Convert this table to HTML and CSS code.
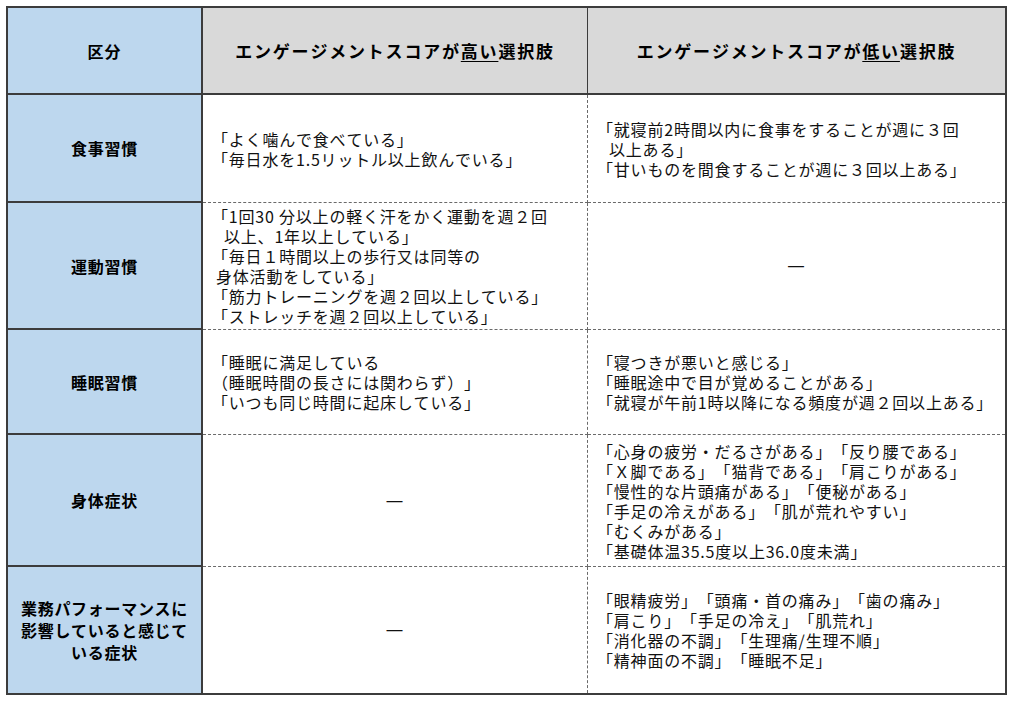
FILE: index.html
```html
<!DOCTYPE html>
<html lang="ja">
<head>
<meta charset="utf-8">
<title>エンゲージメントスコア</title>
<link rel="stylesheet" href="styles.css">
</head>
<body>
<div class="table">
  <div class="cell head-key">区分</div>
  <div class="cell head">エンゲージメントスコアが<span class="ul">高い</span>選択肢</div>
  <div class="cell head last">エンゲージメントスコアが<span class="ul">低い</span>選択肢</div>

  <div class="cell key">食事習慣</div>
  <div class="cell body">
    <div>「よく噛んで食べている」</div>
    <div>「毎日水を1.5リットル以上飲んでいる」</div>
  </div>
  <div class="cell body last">
    <div>「就寝前2時間以内に食事をすることが週に３回</div>
    <div class="ind">以上ある」</div>
    <div>「甘いものを間食することが週に３回以上ある」</div>
  </div>

  <div class="cell key">運動習慣</div>
  <div class="cell body">
    <div>「1回30 分以上の軽く汗をかく運動を週２回</div>
    <div class="ind">以上、1年以上している」</div>
    <div>「毎日１時間以上の歩行又は同等の</div>
    <div class="ind-s">身体活動をしている」</div>
    <div>「筋力トレーニングを週２回以上している」</div>
    <div>「ストレッチを週２回以上している」</div>
  </div>
  <div class="cell body last dash">—</div>

  <div class="cell key">睡眠習慣</div>
  <div class="cell body">
    <div>「睡眠に満足している</div>
    <div>（睡眠時間の長さには関わらず）」</div>
    <div>「いつも同じ時間に起床している」</div>
  </div>
  <div class="cell body last">
    <div>「寝つきが悪いと感じる」</div>
    <div>「睡眠途中で目が覚めることがある」</div>
    <div>「就寝が午前1時以降になる頻度が週２回以上ある」</div>
  </div>

  <div class="cell key">身体症状</div>
  <div class="cell body dash">—</div>
  <div class="cell body last">
    <div>「心身の疲労・だるさがある」「反り腰である」</div>
    <div>「Ｘ脚である」「猫背である」「肩こりがある」</div>
    <div>「慢性的な片頭痛がある」「便秘がある」</div>
    <div>「手足の冷えがある」「肌が荒れやすい」</div>
    <div>「むくみがある」</div>
    <div>「基礎体温35.5度以上36.0度未満」</div>
  </div>

  <div class="cell key bottom">業務パフォーマンスに<br>影響していると感じて<br>いる症状</div>
  <div class="cell body dash bottom">—</div>
  <div class="cell body last bottom">
    <div>「眼精疲労」「頭痛・首の痛み」「歯の痛み」</div>
    <div>「肩こり」「手足の冷え」「肌荒れ」</div>
    <div>「消化器の不調」「生理痛/生理不順」</div>
    <div>「精神面の不調」「睡眠不足」</div>
  </div>
</div>
</body>
</html>
```

FILE: styles.css
```css
html, body {
  margin: 0;
  padding: 0;
  background: #ffffff;
}

body {
  padding: 6px 0 0 6px;
  font-family: "Noto Sans CJK JP", "Noto Sans", sans-serif;
  color: #111111;
  text-spacing-trim: space-all;
  font-kerning: none;
}

.table {
  box-sizing: border-box;
  width: 1001px;
  height: 689px;
  border: 2px solid #3c3c3c;
  display: grid;
  grid-template-columns: 195px 385px 1fr;
  grid-template-rows: 87px 108px 127px 105px 132px 1fr;
}

.cell {
  box-sizing: border-box;
  display: flex;
  flex-direction: column;
  justify-content: center;
}

.head-key,
.head {
  background: #d9d9d9;
  border-bottom: 2px solid #3c3c3c;
  font-weight: 700;
  font-size: 17px;
  align-items: center;
  text-align: center;
  color: #000000;
  letter-spacing: 1.8px;
  flex-direction: row;
}

.head-key {
  background: #bdd7ee;
  border-right: 2px solid #3c3c3c;
  font-size: 16px;
  letter-spacing: 1px;
}

.head {
  border-right: 1px solid #3c3c3c;
}

.head.last,
.body.last {
  border-right: none;
}

.ul {
  text-decoration: underline;
  text-underline-offset: 3px;
  text-decoration-thickness: 1px;
}

.key {
  background: #bdd7ee;
  border-right: 2px solid #3c3c3c;
  border-bottom: 2px solid #3c3c3c;
  font-weight: 700;
  font-size: 16px;
  line-height: 22px;
  letter-spacing: 0.7px;
  color: #000000;
  align-items: center;
  text-align: center;
}

.body {
  border-right: 1px dashed #6a6a6a;
  border-bottom: 1px dashed #6a6a6a;
  padding-left: 9px;
  font-size: 16px;
  line-height: 20px;
  letter-spacing: 0.8px;
  white-space: nowrap;
}

.bottom {
  border-bottom: none;
}

.ind {
  padding-left: 12px;
}

.ind-s {
  padding-left: 4px;
}

.dash {
  align-items: center;
  padding-left: 0;
  font-family: "Liberation Sans", sans-serif;
  font-size: 16px;
}
```
